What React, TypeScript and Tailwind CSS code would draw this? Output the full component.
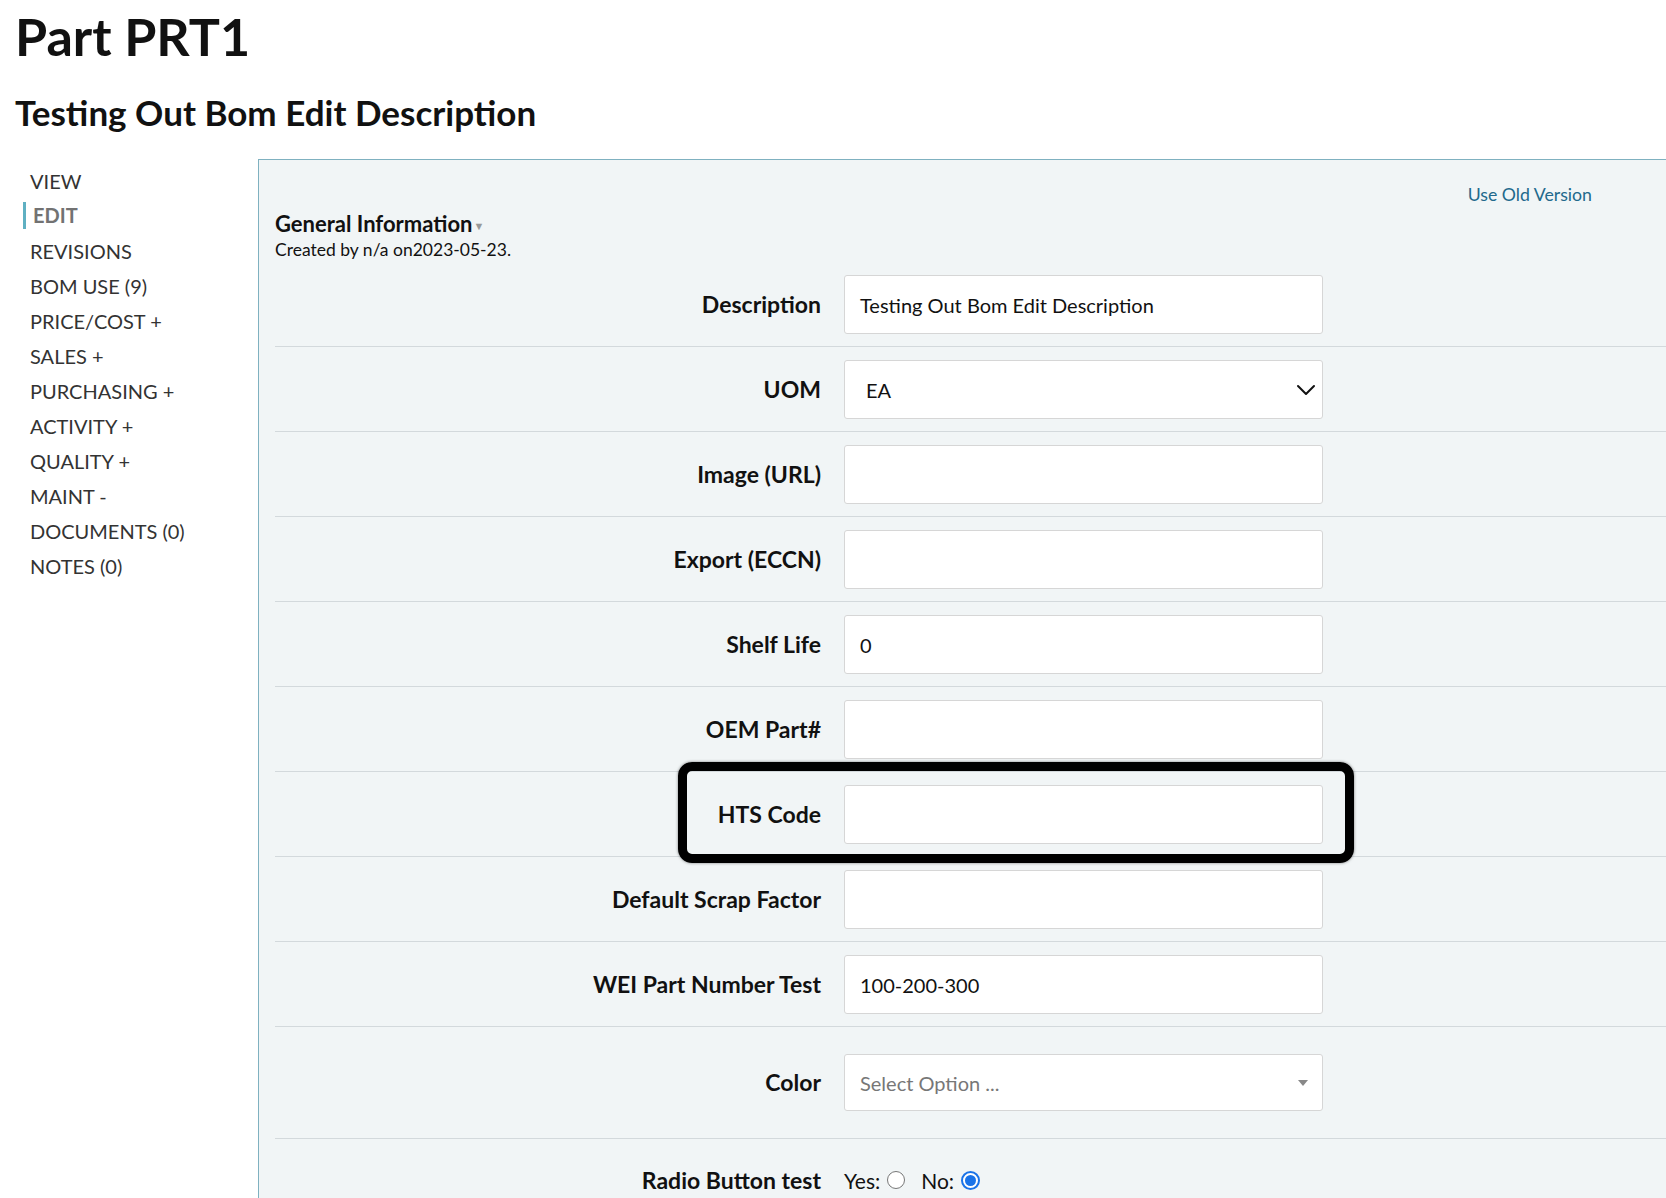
import React from 'react'

const nav = [
  'VIEW',
  'EDIT',
  'REVISIONS',
  'BOM USE (9)',
  'PRICE/COST +',
  'SALES +',
  'PURCHASING +',
  'ACTIVITY +',
  'QUALITY +',
  'MAINT -',
  'DOCUMENTS (0)',
  'NOTES (0)',
]

type Field = { label: string; value?: string; kind?: 'text' | 'select'; highlight?: boolean }

const fields: Field[] = [
  { label: 'Description', value: 'Testing Out Bom Edit Description' },
  { label: 'UOM', value: 'EA', kind: 'select' },
  { label: 'Image (URL)' },
  { label: 'Export (ECCN)' },
  { label: 'Shelf Life', value: '0' },
  { label: 'OEM Part#' },
  { label: 'HTS Code', highlight: true },
  { label: 'Default Scrap Factor' },
  { label: 'WEI Part Number Test', value: '100-200-300' },
]

function Row({ f }: { f: Field }) {
  return (
    <div className="relative flex items-center border-b border-[#d3d9dc] pt-[13px] pb-[12px]">
      <div className="w-[569px] shrink-0 pr-[23px] text-right text-[23px] font-bold text-[#111]">{f.label}</div>
      <div className="flex h-[59px] w-[479px] shrink-0 items-center rounded-[3px] border border-[#d6d6d6] bg-white text-[20px] text-[#111]">
        {f.kind === 'select' ? (
          <div className="flex w-full items-center justify-between pl-[21px] pr-[6px]">
            <span>{f.value}</span>
            <svg width="20" height="12" viewBox="0 0 20 12" fill="none" stroke="#111" strokeWidth="2" strokeLinecap="round" strokeLinejoin="round">
              <path d="M2 2l8 8 8-8" />
            </svg>
          </div>
        ) : (
          <span className="pl-[15px]">{f.value}</span>
        )}
      </div>
      {f.highlight && (
        <div className="pointer-events-none absolute left-[403px] top-[-10px] h-[101px] w-[676px] rounded-[14px] border-[9px] border-black shadow-[0_0_3px_rgba(0,0,0,0.5)]" />
      )}
    </div>
  )
}

export default function App() {
  return (
    <div className="min-h-screen overflow-hidden bg-white font-['Lato',sans-serif] text-[#111]">
      <h1 className="pl-[15px] pt-[6px] text-[52px] font-bold leading-[60px]">Part PRT1</h1>
      <h2 className="pl-[15px] pt-[24px] text-[35px] font-bold leading-[44px]">Testing Out Bom Edit Description</h2>

      <div className="mt-[25px] flex">
        <ul className="w-[258px] shrink-0 pt-[4px]">
          {nav.map(n =>
            n === 'EDIT' ? (
              <li key={n} className="flex h-[35px] items-center pl-[23px]">
                <span className="border-l-[3px] border-[#5fb0c2] pl-[7px] text-[20px] font-bold leading-[27px] text-[#727272]">{n}</span>
              </li>
            ) : (
              <li key={n} className="flex h-[35px] items-center pl-[30px] text-[20px] text-[#333]">{n}</li>
            ),
          )}
        </ul>

        <div className="flex-1 border-l border-t border-[#7fb1c0] bg-[#f1f5f6] pl-[16px] pt-[21px]">
          <div className="flex h-[28px] items-center justify-end pr-[74px]">
            <a className="text-[17.7px] text-[#22698c]">Use Old Version</a>
          </div>
          <div className="flex h-[29px] items-center text-[22px] font-bold">
            General Information
            <span className="ml-[1px] mt-[6px] text-[11px] text-[#999]">▼</span>
          </div>
          <div className="flex h-[24px] items-center text-[17.5px] text-[#111]">Created by n/a on2023-05-23.</div>

          {fields.map(f => (
            <Row key={f.label} f={f} />
          ))}

          <div className="flex items-center border-b border-[#d3d9dc] pt-[27px] pb-[27px]">
            <div className="w-[569px] shrink-0 pr-[23px] text-right text-[23px] font-bold">Color</div>
            <div className="flex h-[57px] w-[479px] shrink-0 items-center justify-between rounded-[3px] border border-[#d6d6d6] bg-white pl-[15px] pr-[14px] text-[20px] text-[#777]">
              <span>Select Option ...</span>
              <svg width="10" height="6" viewBox="0 0 10 6">
                <path d="M0 0h10L5 6z" fill="#888" />
              </svg>
            </div>
          </div>

          <div className="flex items-center pt-[24px] pb-[20px]">
            <div className="w-[569px] shrink-0 pr-[23px] text-right text-[23px] font-bold">Radio Button test</div>
            <div className="flex items-center text-[21px] text-[#111]">
              <span>Yes:</span>
              <span className="ml-[7px] inline-block h-[18px] w-[18px] rounded-full border border-[#777] bg-white" />
              <span className="ml-[16px]">No:</span>
              <span className="ml-[7px] flex h-[19px] w-[19px] items-center justify-center rounded-full border-2 border-[#1a73e8] bg-white">
                <span className="h-[11px] w-[11px] rounded-full bg-[#1a73e8]" />
              </span>
            </div>
          </div>
        </div>
      </div>
    </div>
  )
}
